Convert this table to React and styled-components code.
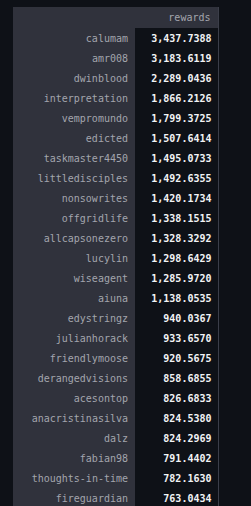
import React from "react";
import styled, { createGlobalStyle } from "styled-components";

const GlobalStyle = createGlobalStyle`
  html, body {
    margin: 0;
    padding: 0;
    background: #0e1117;
  }
`;

const Page = styled.div`
  width: 251px;
  height: 506px;
  overflow: hidden;
  background: #0e1117;
  padding: 7px 0 0 13px;
  box-sizing: border-box;
`;

const Table = styled.table`
  border-collapse: collapse;
  border-spacing: 0;
  font-family: "DejaVu Sans Mono", "Liberation Mono", monospace;
  font-size: 10px;
  border-right: 1px solid #3b3e49;
`;

const HeadCell = styled.th`
  height: 21px;
  padding: 0 7px;
  background: #30323c;
  color: #a3a5ad;
  font-weight: normal;
  text-align: right;
  width: ${(p) => p.width}px;
  box-sizing: border-box;
`;

const IndexCell = styled.th`
  height: 20px;
  padding: 0 7px;
  background: #30323c;
  color: #a3a5ad;
  font-weight: normal;
  text-align: right;
`;

const ValueCell = styled.td`
  height: 20px;
  padding: 0 6px 0 7px;
  color: #f2f3f5;
  font-weight: bold;
  text-align: right;
  background: #0e1117;
`;

const rows = [
  ["calumam", "3,437.7388"],
  ["amr008", "3,183.6119"],
  ["dwinblood", "2,289.0436"],
  ["interpretation", "1,866.2126"],
  ["vempromundo", "1,799.3725"],
  ["edicted", "1,507.6414"],
  ["taskmaster4450", "1,495.0733"],
  ["littledisciples", "1,492.6355"],
  ["nonsowrites", "1,420.1734"],
  ["offgridlife", "1,338.1515"],
  ["allcapsonezero", "1,328.3292"],
  ["lucylin", "1,298.6429"],
  ["wiseagent", "1,285.9720"],
  ["aiuna", "1,138.0535"],
  ["edystringz", "940.0367"],
  ["julianhorack", "933.6570"],
  ["friendlymoose", "920.5675"],
  ["derangedvisions", "858.6855"],
  ["acesontop", "826.6833"],
  ["anacristinasilva", "824.5380"],
  ["dalz", "824.2969"],
  ["fabian98", "791.4402"],
  ["thoughts-in-time", "782.1630"],
  ["fireguardian", "763.0434"],
];

export default function App() {
  return (
    <Page>
      <GlobalStyle />
      <Table>
        <thead>
          <tr>
            <HeadCell width={122}></HeadCell>
            <HeadCell width={83}>rewards</HeadCell>
          </tr>
        </thead>
        <tbody>
          {rows.map(([name, value]) => (
            <tr key={name}>
              <IndexCell>{name}</IndexCell>
              <ValueCell>{value}</ValueCell>
            </tr>
          ))}
        </tbody>
      </Table>
    </Page>
  );
}
